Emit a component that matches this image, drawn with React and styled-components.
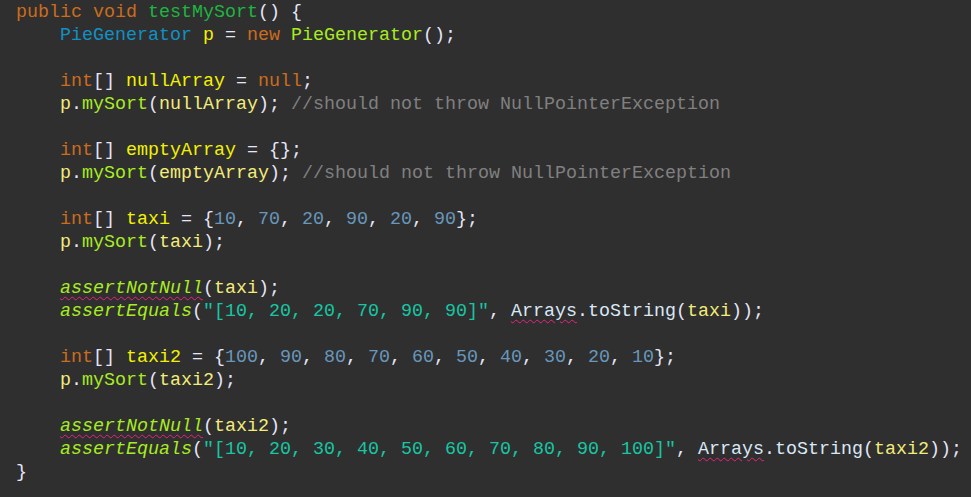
import React from "react";
import styled, { createGlobalStyle, css } from "styled-components";

const GlobalStyle = createGlobalStyle`
  html, body {
    margin: 0;
    padding: 0;
    background: #2f2f2f;
  }
`;

const palette = {
  kw: "#cc6c1d",
  decl: "#1eb540",
  type: "#1290c3",
  vdecl: "#f2f200",
  v: "#f3ec79",
  call: "#a7ec21",
  op: "#e6e6fa",
  num: "#6897bb",
  str: "#17c6a3",
  cmt: "#808080",
  plain: "#d9e8f7",
};

const Editor = styled.main`
  box-sizing: border-box;
  width: 971px;
  height: 497px;
  overflow: hidden;
  background: #2f2f2f;
  padding: 1px 0 0 16px;
  font-family: "Liberation Mono", "DejaVu Sans Mono", monospace;
  font-size: 18.33px;
  display: flex;
  flex-direction: column;
`;

const CodeLine = styled.div`
  height: 23px;
  line-height: 23px;
  white-space: pre;
  color: ${palette.plain};
`;

const Token = styled.span`
  color: ${(p) => palette[p.$kind] || palette.plain};
  ${(p) =>
    p.$italic &&
    css`
      font-style: italic;
    `}
  ${(p) =>
    p.$squiggle &&
    css`
      text-decoration-line: underline;
      text-decoration-style: wavy;
      text-decoration-color: #e8237e;
      text-decoration-thickness: 1px;
      text-underline-offset: 3px;
    `}
`;

const I = "    ";

const lines = [
  [["kw", "public"], ["plain", " "], ["kw", "void"], ["plain", " "], ["decl", "testMySort"], ["op", "() {"]],
  [["plain", I], ["type", "PieGenerator"], ["plain", " "], ["vdecl", "p"], ["op", " = "], ["kw", "new"], ["plain", " "], ["call", "PieGenerator"], ["op", "();"]],
  [],
  [["plain", I], ["kw", "int"], ["op", "[] "], ["vdecl", "nullArray"], ["op", " = "], ["kw", "null"], ["op", ";"]],
  [["plain", I], ["v", "p"], ["op", "."], ["call", "mySort"], ["op", "("], ["v", "nullArray"], ["op", "); "], ["cmt", "//should not throw NullPointerException"]],
  [],
  [["plain", I], ["kw", "int"], ["op", "[] "], ["vdecl", "emptyArray"], ["op", " = {};"]],
  [["plain", I], ["v", "p"], ["op", "."], ["call", "mySort"], ["op", "("], ["v", "emptyArray"], ["op", "); "], ["cmt", "//should not throw NullPointerException"]],
  [],
  [["plain", I], ["kw", "int"], ["op", "[] "], ["vdecl", "taxi"], ["op", " = {"], ["num", "10"], ["op", ", "], ["num", "70"], ["op", ", "], ["num", "20"], ["op", ", "], ["num", "90"], ["op", ", "], ["num", "20"], ["op", ", "], ["num", "90"], ["op", "};"]],
  [["plain", I], ["v", "p"], ["op", "."], ["call", "mySort"], ["op", "("], ["v", "taxi"], ["op", ");"]],
  [],
  [["plain", I], ["call", "assertNotNull", "is"], ["op", "("], ["v", "taxi"], ["op", ");"]],
  [["plain", I], ["call", "assertEquals", "i"], ["op", "("], ["str", "\"[10, 20, 20, 70, 90, 90]\""], ["op", ", "], ["plain", "Arrays", "s"], ["op", "."], ["plain", "toString"], ["op", "("], ["v", "taxi"], ["op", "));"]],
  [],
  [["plain", I], ["kw", "int"], ["op", "[] "], ["vdecl", "taxi2"], ["op", " = {"], ["num", "100"], ["op", ", "], ["num", "90"], ["op", ", "], ["num", "80"], ["op", ", "], ["num", "70"], ["op", ", "], ["num", "60"], ["op", ", "], ["num", "50"], ["op", ", "], ["num", "40"], ["op", ", "], ["num", "30"], ["op", ", "], ["num", "20"], ["op", ", "], ["num", "10"], ["op", "};"]],
  [["plain", I], ["v", "p"], ["op", "."], ["call", "mySort"], ["op", "("], ["v", "taxi2"], ["op", ");"]],
  [],
  [["plain", I], ["call", "assertNotNull", "is"], ["op", "("], ["v", "taxi2"], ["op", ");"]],
  [["plain", I], ["call", "assertEquals", "i"], ["op", "("], ["str", "\"[10, 20, 30, 40, 50, 60, 70, 80, 90, 100]\""], ["op", ", "], ["plain", "Arrays", "s"], ["op", "."], ["plain", "toString"], ["op", "("], ["v", "taxi2"], ["op", "));"]],
  [["op", "}"]],
];

export default function App() {
  return (
    <>
      <GlobalStyle />
      <Editor>
        {lines.map((tokens, li) => (
          <CodeLine key={li}>
            {tokens.length === 0
              ? " "
              : tokens.map(([kind, text, flags = ""], ti) => (
                  <Token
                    key={ti}
                    $kind={kind}
                    $italic={flags.includes("i")}
                    $squiggle={flags.includes("s")}
                  >
                    {text}
                  </Token>
                ))}
          </CodeLine>
        ))}
      </Editor>
    </>
  );
}
